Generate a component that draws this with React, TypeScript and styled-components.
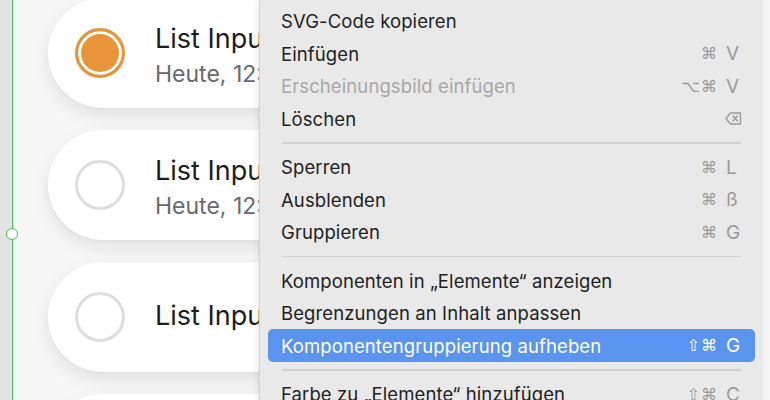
import React from 'react'
import styled, { createGlobalStyle } from 'styled-components'

const GlobalStyle = createGlobalStyle`
  html, body {
    margin: 0;
    padding: 0;
    background: #d4d4d4;
  }
  body {
    font-family: Inter, "Liberation Sans", Arial, sans-serif;
    -webkit-font-smoothing: antialiased;
  }
`

type Item =
  | { kind: 'item'; label: string; mods?: string; key?: string; del?: boolean; disabled?: boolean; active?: boolean }
  | { kind: 'sep' }

const menuItems: Item[] = [
  { kind: 'item', label: 'SVG-Code kopieren' },
  { kind: 'item', label: 'Einfügen', mods: '⌘', key: 'V' },
  { kind: 'item', label: 'Erscheinungsbild einfügen', mods: '⌥⌘', key: 'V', disabled: true },
  { kind: 'item', label: 'Löschen', del: true },
  { kind: 'sep' },
  { kind: 'item', label: 'Sperren', mods: '⌘', key: 'L' },
  { kind: 'item', label: 'Ausblenden', mods: '⌘', key: 'ß' },
  { kind: 'item', label: 'Gruppieren', mods: '⌘', key: 'G' },
  { kind: 'sep' },
  { kind: 'item', label: 'Komponenten in „Elemente“ anzeigen' },
  { kind: 'item', label: 'Begrenzungen an Inhalt anpassen' },
  { kind: 'item', label: 'Komponentengruppierung aufheben', mods: '⇧⌘', key: 'G', active: true },
  { kind: 'sep' },
  { kind: 'item', label: 'Farbe zu „Elemente“ hinzufügen', mods: '⇧⌘', key: 'C' },
]

const cards = [
  { title: 'List Input', sub: 'Heute, 12:00', checked: true },
  { title: 'List Input', sub: 'Heute, 12:00', checked: false },
  { title: 'List Input', sub: '', checked: false },
  { title: 'List Input', sub: '', checked: false },
]

const DeleteIcon = () => (
  <svg width="17" height="13" viewBox="0 0 17 13" fill="none">
    <path d="M5.5 1 H15.5 V12 H5.5 L1 6.5 Z" stroke="#9b9b9b" strokeWidth="1.4" strokeLinejoin="round" />
    <path d="M8 4 L12.5 9 M12.5 4 L8 9" stroke="#9b9b9b" strokeWidth="1.4" strokeLinecap="round" />
  </svg>
)

const App = () => {
  return (
    <>
      <GlobalStyle />
      <Page>
        <Rail>
          <Handle />
        </Rail>
        <Canvas>
          <CardList>
            {cards.map((c, i) => (
              <Card key={i}>
                <Radio $checked={c.checked} />
                <TextBlock $twoLine={!!c.sub}>
                  <Title>{c.title}</Title>
                  {c.sub && <Sub>{c.sub}</Sub>}
                </TextBlock>
              </Card>
            ))}
          </CardList>
          <Menu>
            {menuItems.map((it, i) =>
              it.kind === 'sep' ? (
                <Separator key={i} />
              ) : (
                <Row key={i} $active={it.active} $disabled={it.disabled}>
                  <Label>{it.label}</Label>
                  {it.del ? (
                    <Shortcut>
                      <DeleteIcon />
                    </Shortcut>
                  ) : it.key ? (
                    <Shortcut>
                      <Mods $active={it.active}>{it.mods}</Mods>
                      <KeyChar $active={it.active}>{it.key}</KeyChar>
                    </Shortcut>
                  ) : null}
                </Row>
              )
            )}
          </Menu>
        </Canvas>
      </Page>
    </>
  )
}

const Page = styled.div`
  display: flex;
  width: 770px;
  height: 400px;
  overflow: hidden;
  background: #e2e2e2;
`

const Rail = styled.div`
  position: relative;
  z-index: 2;
  width: 12px;
  flex-shrink: 0;
  background: #e3e3e3;
  border-right: 1.5px solid #3fc552;
`

const Handle = styled.div`
  position: absolute;
  top: 228px;
  left: 6px;
  width: 10px;
  height: 10px;
  border-radius: 50%;
  border: 1.5px solid #3fc552;
  background: #fff;
`

const Canvas = styled.div`
  position: relative;
  flex: 1;
  background: #f7f7f7;
`

const CardList = styled.div`
  display: flex;
  flex-direction: column;
  gap: 22px;
  margin-top: -2px;
  padding-left: 35px;
`

const Card = styled.div`
  display: flex;
  align-items: center;
  gap: 30px;
  width: 420px;
  height: 110px;
  box-sizing: border-box;
  padding-left: 27px;
  border-radius: 55px;
  background: #fff;
  box-shadow: 0 7px 18px rgba(0, 0, 0, 0.09), 0 1px 3px rgba(0, 0, 0, 0.03);
  flex-shrink: 0;
`

const Radio = styled.div<{ $checked: boolean }>`
  width: 50px;
  height: 50px;
  flex-shrink: 0;
  box-sizing: border-box;
  border-radius: 50%;
  border: 3px solid ${(p) => (p.$checked ? '#e8953a' : '#dedede')};
  background: ${(p) => (p.$checked ? '#e8953a' : '#fff')};
  box-shadow: ${(p) => (p.$checked ? 'inset 0 0 0 3px #fff' : 'none')};
`

const TextBlock = styled.div<{ $twoLine: boolean }>`
  display: flex;
  flex-direction: column;
  gap: 4px;
  margin-top: ${(p) => (p.$twoLine ? '6px' : '-2px')};
`

const Title = styled.div`
  font-size: 27px;
  line-height: 32px;
  color: #1d1d1d;
  white-space: nowrap;
`

const Sub = styled.div`
  font-size: 23px;
  line-height: 30px;
  color: #6a6a6a;
  white-space: nowrap;
`

const Menu = styled.div`
  position: absolute;
  top: 0;
  left: 246px;
  width: 504px;
  height: 420px;
  box-sizing: border-box;
  padding-top: 4.75px;
  background: #e9e9e9;
  border-left: 1px solid #d2d2d2;
  box-shadow: -2px 0 6px rgba(0, 0, 0, 0.08);
`

const Row = styled.div<{ $active?: boolean; $disabled?: boolean }>`
  display: flex;
  align-items: center;
  height: 32.5px;
  margin: 0 8px;
  padding: 0 13px 0 13px;
  border-radius: 5px;
  font-size: 18.5px;
  letter-spacing: 0.1px;
  background: ${(p) => (p.$active ? '#5b94ee' : 'transparent')};
  color: ${(p) => (p.$active ? '#fff' : p.$disabled ? '#a8a8a8' : '#222')};
`

const Label = styled.span`
  flex: 1;
  white-space: nowrap;
`

const Shortcut = styled.span`
  display: flex;
  align-items: center;
`

const Mods = styled.span<{ $active?: boolean }>`
  font-family: "DejaVu Sans", sans-serif;
  font-size: 16px;
  letter-spacing: 1px;
  color: ${(p) => (p.$active ? '#fff' : '#9b9b9b')};
`

const KeyChar = styled.span<{ $active?: boolean }>`
  width: 16px;
  margin-left: 8px;
  font-size: 19px;
  color: ${(p) => (p.$active ? '#fff' : '#9b9b9b')};
`

const Separator = styled.div`
  height: 16px;
  display: flex;
  align-items: center;
  margin: 0 22px;
  &::after {
    content: '';
    flex: 1;
    height: 1.5px;
    background: #d2d2d2;
  }
`

export default App
